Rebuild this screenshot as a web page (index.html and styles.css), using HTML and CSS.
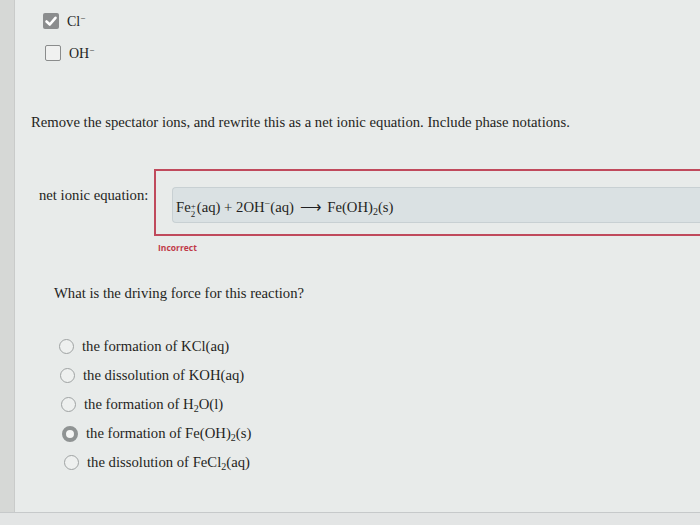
FILE: index.html
```html
<!DOCTYPE html>
<html>
<head>
<meta charset="utf-8">
<link rel="stylesheet" href="styles.css">
</head>
<body>
<div class="page">
  <div class="strip"></div>
  <div class="content">
    <div class="checks">
      <div class="check-row">
        <span class="box checked"><svg viewBox="0 0 16 16" width="16" height="16"><path d="M3.5 8.5 L6.8 11.5 L12.5 4.8" fill="none" stroke="#fff" stroke-width="2.6" stroke-linecap="round" stroke-linejoin="round"/></svg></span>
        <span class="lbl">Cl<sup>−</sup></span>
      </div>
      <div class="check-row second">
        <span class="box"></span>
        <span class="lbl">OH<sup>−</sup></span>
      </div>
    </div>
    <p class="prompt">Remove the spectator ions, and rewrite this as a net ionic equation. Include phase notations.</p>
    <div class="eq-row">
      <div class="eq-label">net ionic equation:</div>
      <div class="eq-wrap">
        <div class="eq-box">
          <div class="eq-field">Fe<span class="ss"><span class="ss-t">+</span><span class="ss-b">2</span></span>(aq) + 2OH<sup>−</sup>(aq) <span class="arrow">⟶</span> Fe(OH)<sub>2</sub>(s)</div>
        </div>
        <div class="incorrect">Incorrect</div>
      </div>
    </div>
    <p class="question">What is the driving force for this reaction?</p>
    <ul class="options">
      <li><span class="radio"></span><span class="opt">the formation of KCl(aq)</span></li>
      <li><span class="radio"></span><span class="opt">the dissolution of KOH(aq)</span></li>
      <li><span class="radio"></span><span class="opt">the formation of H<sub>2</sub>O(l)</span></li>
      <li><span class="radio selected"></span><span class="opt">the formation of Fe(OH)<sub>2</sub>(s)</span></li>
      <li><span class="radio"></span><span class="opt">the dissolution of FeCl<sub>2</sub>(aq)</span></li>
    </ul>
  </div>
  <div class="bottom"></div>
</div>
</body>
</html>
```
FILE: styles.css
```css
html, body {
  margin: 0;
  padding: 0;
  width: 700px;
  height: 525px;
  overflow: hidden;
  background: #e8ebea;
}
.page {
  position: relative;
  width: 700px;
  height: 525px;
  display: flex;
  font-family: "Liberation Serif", "Times New Roman", serif;
  color: #1f1f22;
}
.strip {
  width: 14px;
  flex: none;
  background: #d6d8d6;
  border-right: 1px solid #c9cbca;
}
.content {
  flex: 1;
  padding-left: 16px;
}
.checks {
  padding-top: 13px;
  padding-left: 12px;
}
.check-row {
  display: flex;
  align-items: center;
  height: 16px;
  gap: 8px;
  font-size: 14px;
}
.check-row.second {
  margin-top: 16px;
  padding-left: 2px;
}
.box {
  width: 14px;
  height: 14px;
  border: 1px solid #8a8c8c;
  border-radius: 2px;
  background: #f0f1f0;
  display: flex;
  align-items: center;
  justify-content: center;
}
.box.checked {
  width: 16px;
  height: 16px;
  border: none;
  background: #8b8d8e;
}
.lbl sup {
  font-size: 9px;
  vertical-align: 5px;
}
.prompt {
  margin: 53px 0 0 0;
  font-size: 14.7px;
  line-height: 16px;
}
.eq-row {
  display: flex;
  margin-top: 39px;
}
.eq-label {
  width: 123px;
  padding-left: 8px;
  padding-top: 18px;
  font-size: 14.7px;
  box-sizing: border-box;
  white-space: nowrap;
}
.eq-wrap {
  flex: 1;
  min-width: 0;
}
.eq-box {
  border: 2px solid #c04a5c;
  border-right: none;
  height: 67px;
  box-sizing: border-box;
  padding: 16px 0 0 16px;
}
.eq-field {
  height: 36px;
  box-sizing: border-box;
  background: #dae1e3;
  border: 1px solid #c8d0d3;
  border-right: none;
  border-radius: 4px 0 0 4px;
  font-size: 14.7px;
  line-height: 32px;
  padding-left: 3px;
  white-space: nowrap;
}
.eq-field sup {
  font-size: 10px;
  vertical-align: 5px;
}
.eq-field sub {
  font-size: 10px;
  vertical-align: -3px;
}
.ss {
  display: inline-block;
  vertical-align: -5px;
  line-height: 8px;
  font-size: 9px;
  margin-right: 1px;
}
.ss-t, .ss-b {
  display: block;
}
.arrow {
  padding: 0 2px;
}
.incorrect {
  margin-top: 6px;
  padding-left: 4px;
  font-family: "Open Sans", "Liberation Sans", sans-serif;
  font-weight: 700;
  font-size: 8.5px;
  color: #c03a48;
}
.question {
  margin: 32px 0 0 23px;
  font-size: 14.7px;
  line-height: 16px;
}
.options {
  list-style: none;
  margin: 31px 0 0 28px;
  padding: 0;
}
.options li {
  display: flex;
  align-items: center;
  height: 29px;
  gap: 8px;
  font-size: 14.7px;
}
.options li:nth-child(2) { padding-left: 1px; }
.options li:nth-child(3) { padding-left: 2px; }
.options li:nth-child(4) { padding-left: 3px; }
.options li:nth-child(5) { padding-left: 5px; }
.options sub {
  font-size: 10px;
  vertical-align: -3px;
}
.radio {
  width: 13px;
  height: 13px;
  border: 1.5px solid #9fa3a3;
  border-radius: 50%;
  background: #eef0ef;
  flex: none;
}
.radio.selected {
  border: 4px solid #8f9393;
  width: 8px;
  height: 8px;
  background: #f4f5f4;
}
.bottom {
  position: absolute;
  left: 0;
  right: 0;
  top: 512px;
  height: 13px;
  background: #e3e5e5;
  border-top: 1px solid #c6c9ca;
}
```
